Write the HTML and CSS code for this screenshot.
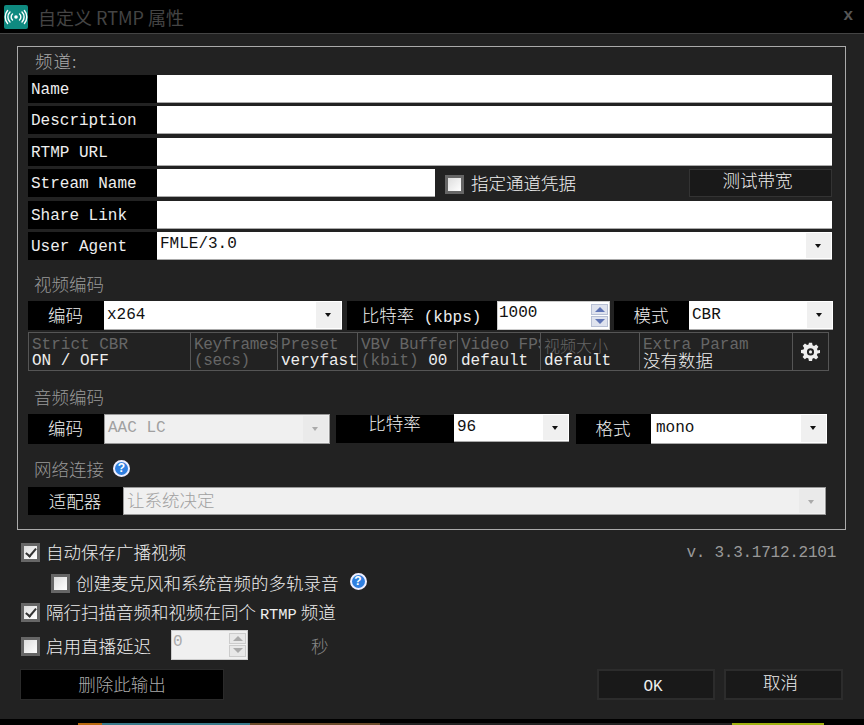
FILE: index.html
```html
<!DOCTYPE html>
<html lang="zh">
  <head>
    <meta charset="UTF-8" />
    <title>自定义 RTMP 属性</title>
    <link rel="stylesheet" href="styles.css">
  </head>
  <body>
    <div class="titlebar">
      <svg class="app-icon" viewBox="0 0 24 24" width="24" height="24">
        <rect width="24" height="24" rx="2" fill="#0f8a80" />
        <g fill="none" stroke="#fff" stroke-width="1.4" stroke-linecap="round">
          <path d="M8.5 9a4 4 0 0 0 0 6M15.5 9a4 4 0 0 1 0 6" />
          <path d="M6 7a7 7 0 0 0 0 10M18 7a7 7 0 0 1 0 10" />
          <path d="M3.6 5.5a10 10 0 0 0 0 13M20.4 5.5a10 10 0 0 1 0 13" />
        </g>
        <circle cx="12" cy="12" r="1.8" fill="#fff" />
      </svg>
      <span class="title">自定义 RTMP 属性</span>
      <span class="close">x</span>
    </div>

    <div class="dialog">
      <div class="group">
        <div class="legend zh">频道:</div>
        <div class="channel">
          <div class="row"><div class="label">Name</div><div class="field"></div></div>
          <div class="row"><div class="label">Description</div><div class="field"></div></div>
          <div class="row"><div class="label">RTMP URL</div><div class="field"></div></div>
          <div class="row">
            <div class="label">Stream Name</div>
            <div class="field stream"></div>
            <span class="check check-stream"></span>
            <span class="zh check-text">指定通道凭据</span>
            <div class="test-btn zh">测试带宽</div>
          </div>
          <div class="row"><div class="label">Share Link</div><div class="field"></div></div>
          <div class="row">
            <div class="label">User Agent</div>
            <div class="select agent"><span class="value">FMLE/3.0</span><span class="arrow"></span></div>
          </div>
        </div>

        <div class="section zh video-title">视频编码</div>
        <div class="row row-video">
          <div class="label center w76 zh">编码</div>
          <div class="select w238"><span class="value">x264</span><span class="arrow"></span></div>
          <div class="label center w150 ml5"><span class="zh">比特率</span> (kbps)</div>
          <div class="spin">
            <span class="spin-value">1000</span>
            <span class="spin-btns">
              <span class="spin-btn"><i class="up"></i></span>
              <span class="spin-btn"><i class="down"></i></span>
            </span>
          </div>
          <div class="label center w75 ml4 zh">模式</div>
          <div class="select w144"><span class="value">CBR</span><span class="arrow"></span></div>
        </div>

        <div class="params">
          <div class="cell"><span class="cap">Strict CBR</span><span class="val">ON / OFF</span></div>
          <div class="cell cell-key"><span class="cap">Keyframes</span><span class="cap">(secs)</span></div>
          <div class="cell"><span class="cap">Preset</span><span class="val">veryfast</span></div>
          <div class="cell"><span class="cap">VBV Buffer</span><span class="val"><span class="cap">(kbit)</span> 00</span></div>
          <div class="cell"><span class="cap">Video FPS</span><span class="val">default</span></div>
          <div class="cell"><span class="cap zh">视频大小</span><span class="val">default</span></div>
          <div class="cell"><span class="cap">Extra Param</span><span class="val zh">没有数据</span></div>
          <div class="cell gear-cell">
            <svg viewBox="0 0 24 24" width="19" height="19">
              <path fill="#eee" fill-rule="evenodd" d="M10 1h4l.6 3.2 1.900.8 2.700-1.800 2.800 2.800-1.800 2.700.8 1.900L24 10v4l-3.200.6-.8 1.900 1.800 2.700-2.800 2.800-2.700-1.800-1.900.8L14 24h-4l-.6-3.200-1.900-.8-2.700 1.800-2.800-2.800 1.800-2.700-.8-1.900L0 14v-4l3.200-.6.8-1.900-1.800-2.700 2.800-2.800 2.700 1.800 1.900-.8zM12 8a4.500 4.500 0 1 0 0 9 4.500 4.500 0 0 0 0-9z" />
              <circle cx="12" cy="12.500" r="2" fill="#eee" />
            </svg>
          </div>
        </div>

        <div class="section zh audio-title">音频编码</div>
        <div class="row row-audio">
          <div class="label center w76 zh">编码</div>
          <div class="select disabled w226"><span class="value">AAC LC</span><span class="arrow"></span></div>
          <div class="label center w118 ml6 zh raised">比特率</div>
          <div class="select w115 short"><span class="value">96</span><span class="arrow"></span></div>
          <div class="label center w75 ml7 zh">格式</div>
          <div class="select w176"><span class="value">mono</span><span class="arrow"></span></div>
        </div>

        <div class="section zh net-title">网络连接 <span class="help">?</span></div>
        <div class="row row-net">
          <div class="label center w95 zh">适配器</div>
          <div class="select disabled w703"><span class="value zh">让系统决定</span><span class="arrow"></span></div>
        </div>
      </div>

      <div class="options">
        <div class="opt opt-save">
          <span class="check on"></span><span class="zh">自动保存广播视频</span>
          <span class="version">v. 3.3.1712.2101</span>
        </div>
        <div class="opt opt-multi">
          <span class="check"></span><span class="zh">创建麦克风和系统音频的多轨录音</span>
          <span class="help">?</span>
        </div>
        <div class="opt opt-interleave">
          <span class="check on"></span><span class="zh">隔行扫描音频和视频在同个 <span class="rtmp">RTMP</span> 频道</span>
        </div>
        <div class="opt opt-delay">
          <span class="check"></span><span class="zh">启用直播延迟</span>
          <div class="spin spin-delay">
            <span class="spin-value">0</span>
            <span class="spin-btns">
              <span class="spin-btn"><i class="up"></i></span>
              <span class="spin-btn"><i class="down"></i></span>
            </span>
          </div>
          <span class="zh seconds">秒</span>
        </div>
      </div>

      <div class="footer">
        <div class="btn btn-delete zh">删除此输出</div>
        <div class="btn btn-ok">OK</div>
        <div class="btn btn-cancel zh">取消</div>
      </div>
    </div>
    <div class="desktop"></div>
  </body>
</html>
```

FILE: styles.css
```css
html,
body {
  margin: 0;
  height: 725px;
  overflow: hidden;
  background: #000;
}
body {
  font-family: "Liberation Mono", "Noto Sans CJK SC", monospace;
  font-size: 16px;
  color: #eee;
}
.zh {
  font-family: "Noto Sans CJK SC", sans-serif;
  font-size: 17.5px;
  font-weight: 300;
}

/* title bar */
.titlebar {
  height: 33px;
  background: #000;
  border-bottom: 1px solid #444;
  display: flex;
  align-items: center;
  padding-left: 4px;
}
.app-icon {
  flex: none;
}
.title {
  margin-left: 10px;
  font-family: "Noto Sans CJK SC", sans-serif;
  font-size: 18px;
  color: #444;
}
.close {
  margin-left: auto;
  margin-right: 11px;
  margin-top: -4px;
  font: bold 17px "Liberation Sans", sans-serif;
  color: #555;
}

/* main body */
.dialog {
  height: 686px;
  background: #222;
  border-bottom: 1px solid #000;
  box-sizing: border-box;
  padding-top: 12px;
}
.group {
  box-sizing: border-box;
  margin-left: 17px;
  width: 829px;
  height: 484px;
  border: 1px solid #aaa;
  padding-left: 10px;
}
.legend {
  height: 28px;
  line-height: 27px;
  padding-left: 7px;
  color: #aaa;
  letter-spacing: 1px;
}
.channel {
  display: grid;
  grid-auto-rows: 28px;
  row-gap: 3.4px;
  width: 804px;
}
.row {
  display: flex;
  align-items: stretch;
}
.label {
  flex: none;
  width: 129px;
  box-sizing: border-box;
  padding-left: 3px;
  background: #000;
  color: #eee;
  line-height: 31px;
  white-space: nowrap;
}
.label.center {
  padding: 0 1px 0 0;
  text-align: center;
}
.field {
  flex: 1;
  background: #fff;
  border-bottom: 1px solid #aaa;
}
.field.stream {
  flex: none;
  width: 278px;
}
.check-stream {
  margin: 6px 0 0 10px;
}
.check-text {
  margin-left: 7px;
  line-height: 28px;
}
.test-btn {
  margin-left: auto;
  width: 143px;
  box-sizing: border-box;
  padding-right: 6px;
  background: #191919;
  border: 1px solid #333;
  color: #eee;
  text-align: center;
  line-height: 20px;
}

/* drop downs */
.select {
  flex: none;
  box-sizing: border-box;
  background: #fff;
  color: #111;
  display: flex;
  align-items: center;
  border-bottom: 1px solid #aaa;
}
.select .value {
  flex: 1;
  padding-left: 3px;
}
.select .arrow {
  flex: none;
  width: 25px;
  align-self: stretch;
  margin: 1px 1px 1px 0;
  background: #f0f0f0;
  position: relative;
}
.select .arrow::after {
  content: "";
  position: absolute;
  left: 9px;
  top: 11px;
  border: 3.5px solid transparent;
  border-top: 4px solid #111;
  border-bottom: 0;
}
.select.disabled {
  background: #f0f0f0;
  border: 1px solid #999;
  color: #a0a0a0;
}
.select.disabled .value {
  margin-top: -2px;
}
.select.disabled .arrow {
  background: #eaeaea;
}
.select.disabled .arrow::after {
  border-top-color: #aaa;
}
.agent {
  width: 675px;
}
.agent .value {
  margin-top: -3px;
}
.w76 { width: 76px; }
.w75 { width: 75px; }
.w95 { width: 95px; }
.w115 { width: 115px; }
.w118 { width: 118px; }
.w144 { width: 144px; }
.w150 { width: 150px; }
.w176 { width: 176px; }
.w226 { width: 226px; }
.w238 { width: 238px; }
.w703 { width: 703px; }
.ml4 { margin-left: 4px; }
.ml5 { margin-left: 5px; }
.ml6 { margin-left: 6px; }
.ml7 { margin-left: 7px; }

/* section headings */
.section {
  height: 20px;
  line-height: 18px;
  padding-left: 6px;
  color: #999;
  display: flex;
  align-items: center;
  gap: 9px;
}
.video-title { margin: 14px 0 7px; }
.audio-title { margin: 16px 0 7px; }
.net-title { margin: 15px 0 8px; }
.row-video { height: 29px; }
.row-audio { height: 30px; }
.row-net { height: 28px; }
.row-video .label {
  line-height: 27px;
}
.row-audio .label,
.row-net .label {
  line-height: 28px;
}
.row-audio .raised {
  line-height: 15px;
  margin-top: 1px;
  height: 28px;
}
.row-audio .short {
  height: 28px;
}
.row-audio .w176 .value {
  padding-left: 5px;
}

/* spin box */
.spin {
  flex: none;
  box-sizing: border-box;
  width: 113px;
  border: 1px solid #ccc;
  background: #fff;
  color: #111;
  display: flex;
  justify-content: space-between;
  padding: 0 1px;
}
.spin-value {
  line-height: 22px;
}
.spin-btns {
  display: flex;
  flex-direction: column;
  gap: 1px;
  padding: 2px 0;
}
.spin-btn {
  flex: 1;
  width: 17px;
  background: #dfe3ee;
  border: 1px solid #b8c0d4;
  box-sizing: border-box;
  display: flex;
  align-items: center;
  justify-content: center;
}
.spin-btn i {
  border-left: 5px solid transparent;
  border-right: 5px solid transparent;
}
.spin-btn .up { border-bottom: 5px solid #5f74b5; }
.spin-btn .down { border-top: 5px solid #5f74b5; }

/* encoder parameter strip */
.params {
  margin-top: 2px;
  width: 801px;
  height: 39px;
  box-sizing: border-box;
  border: 1px solid #555;
  display: grid;
  grid-template-columns: 162px 87px 80px 100px 83px 99px 153px 1fr;
}
.cell {
  border-right: 1px solid #555;
  padding: 4px 0 0 3px;
  overflow: hidden;
  display: flex;
  flex-direction: column;
  white-space: nowrap;
  line-height: 16px;
}
.cell:last-child {
  border-right: 0;
}
.cell-key {
  letter-spacing: -0.3px;
}
.cap {
  color: #666;
}
.val {
  color: #eee;
}
.val.zh {
  margin-top: -1px;
}
.cap.zh {
  font-size: 16px;
}
.gear-cell {
  align-items: center;
  justify-content: center;
  padding: 0;
}

/* help mark */
.help {
  display: inline-block;
  box-sizing: border-box;
  width: 17px;
  height: 17px;
  border-radius: 50%;
  border: 2px solid #eef;
  background: #2f7fe0;
  color: #fff;
  font: bold 12px/13px "Liberation Sans", sans-serif;
  text-align: center;
}

/* check boxes */
.check {
  flex: none;
  box-sizing: border-box;
  display: inline-block;
  width: 19px;
  height: 19px;
  border: 3px solid #666;
  background: linear-gradient(135deg, #ddd, #fff);
  position: relative;
}
.check.on::after {
  content: "";
  position: absolute;
  left: 4px;
  top: 0;
  width: 4px;
  height: 9px;
  border: solid #333;
  border-width: 0 2px 2px 0;
  transform: rotate(40deg);
}

/* options under the group box */
.options {
  margin-top: 13px;
  padding: 0 28px 0 21px;
  height: 127px;
  display: flex;
  flex-direction: column;
}
.opt {
  display: flex;
  align-items: center;
  height: 19px;
  white-space: pre;
}
.opt .check {
  margin-right: 6px;
}
.opt > .zh {
  margin-top: -3px;
}
.opt-multi {
  margin: 12px 0 0 30px;
}
.opt-multi .help {
  margin-left: 11px;
  margin-top: -4px;
}
.opt-interleave {
  margin-top: 10px;
}
.rtmp {
  font-family: "Liberation Mono", monospace;
  font-size: 15.4px;
}
.opt-delay {
  margin-top: 15px;
}
.version {
  margin-left: auto;
  color: #999;
  letter-spacing: -0.25px;
}
.spin-delay {
  width: 77px;
  height: 30px;
  margin: -4px 0 0 20px;
  background: #f0f0f0;
  color: #aaa;
}
.spin-delay .spin-btn {
  background: #e8e8e8;
  border-color: #ccc;
}
.spin-delay .spin-btn .up { border-bottom-color: #aaa; }
.spin-delay .spin-btn .down { border-top-color: #aaa; }
.seconds {
  margin-left: 63px;
  color: #888;
}

/* bottom buttons */
.footer {
  margin-top: -1px;
  display: flex;
  padding-left: 20px;
}
.btn {
  box-sizing: border-box;
  height: 31px;
  line-height: 27px;
  text-align: center;
}
.btn-delete {
  width: 204px;
  background: #000;
  border: 1px solid #2a2a2a;
  color: #aaa;
}
.btn-ok,
.btn-cancel {
  background: #191919;
  border: 2px solid #2c2c2c;
  padding-right: 6px;
}
.btn-ok {
  width: 118px;
  margin-left: 373px;
  line-height: 32px;
}
.btn-cancel {
  width: 119px;
  margin-left: 9px;
  line-height: 21px;
}

/* sliver of desktop under the window */
.desktop {
  height: 2px;
  margin-top: 3px;
  background: linear-gradient(90deg, #000 78px, #b8690f 78px, #b8690f 102px, #3a7a8a 102px, #3a7a8a 250px, #6a4a2a 250px, #6a4a2a 380px, #222 380px, #222 732px, #a0b010 732px, #a0b010 824px, #000 824px);
}
```
